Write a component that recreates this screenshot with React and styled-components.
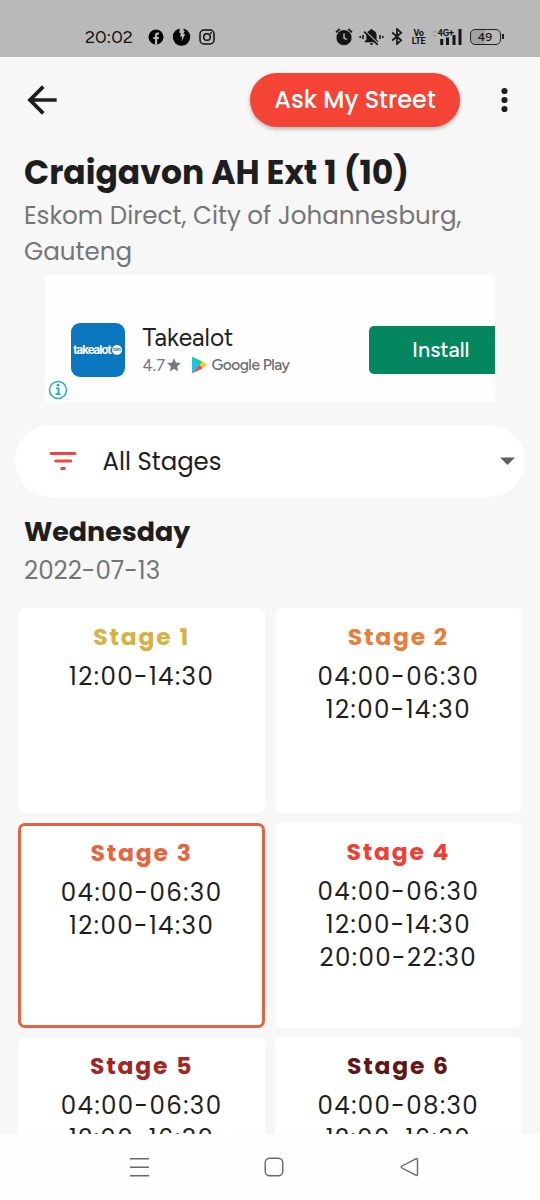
import React from "react";
import styled, { createGlobalStyle } from "styled-components";

const GlobalStyle = createGlobalStyle`
  * { box-sizing: border-box; }
  body {
    margin: 0;
    background: #f7f7f7;
    color: #1e1e1e;
    font-family: Poppins, Inter, "Open Sans", sans-serif;
  }
  svg { display: block; flex: none; }
`;

const Screen = styled.div`
  display: flex;
  flex-direction: column;
  width: 540px;
  height: 1200px;
  overflow: hidden;
`;

/* status bar */
const StatusBar = styled.header`
  flex: none;
  display: flex;
  justify-content: space-between;
  height: 57px;
  padding: 16px 39.5px 0 85px;
  background: #b9b9b9;
  color: #111;
`;
const StatusGroup = styled.div`
  display: flex;
  align-items: center;
  height: 41px;
  gap: ${(p) => p.$gap}px;
`;
const Clock = styled.span`
  width: 55px;
  font: 400 18px/22px Figtree, Inter, sans-serif;
`;
const VoLte = styled.span`
  display: flex;
  flex-direction: column;
  align-items: center;
  width: 12px;
  margin: 0 6.5px 0 4.5px;
  font: 700 9px/8px Roboto, sans-serif;
  letter-spacing: -0.4px;
`;
const StatusIcon = styled.svg`
  margin-right: ${(p) => p.$after || 0}px;
`;
const Battery = styled.span`
  position: relative;
  display: flex;
  align-items: center;
  justify-content: center;
  width: 31px;
  height: 16px;
  border: 1.5px solid #222;
  border-radius: 5px;
  background: linear-gradient(90deg, #a2a2a2 48%, transparent 48%);
  font: 500 12px/12px Figtree, Inter, sans-serif;
  &::after {
    content: "";
    position: absolute;
    right: -4px;
    top: 4px;
    width: 2px;
    height: 5px;
    background: #222;
  }
`;

/* page */
const Content = styled.main`
  flex: 1;
  min-height: 0;
  overflow: hidden;
`;
const Toolbar = styled.div`
  display: flex;
  align-items: center;
  height: 85px;
  padding: 0 29.5px 0 20px;
`;
const PillButton = styled.button`
  width: 210px;
  height: 54px;
  margin: 0 38.5px 0 auto;
  padding: 0;
  border: 0;
  border-radius: 27px;
  background: #f54336;
  box-shadow: 0 2px 4px rgba(0, 0, 0, 0.28);
  color: #fff;
  font: 500 24px/36px Poppins, Inter, sans-serif;
`;
const Heading = styled.div`
  padding: 11px 24px 0 24px;
`;
const Title = styled.h1`
  margin: 0 0 5px;
  font-size: 33px;
  line-height: 40px;
  font-weight: 700;
  white-space: nowrap;
`;
const Subtitle = styled.div`
  color: #757575;
  font-size: 24.6px;
  line-height: 36px;
  white-space: nowrap;
`;

/* advert */
const Ad = styled.section`
  position: relative;
  display: flex;
  align-items: flex-start;
  width: 450.5px;
  height: 127px;
  margin: 5px 0 0 44.5px;
  padding: 48px 0 0 26px;
  background: #fefefe;
  font-family: Figtree, Inter, sans-serif;
`;
const AppLogo = styled.div`
  display: flex;
  align-items: center;
  justify-content: center;
  width: 54px;
  height: 54px;
  border-radius: 9px;
  background: #0a76bd;
  color: #fff;
  font: 700 11.5px/14px Inter, sans-serif;
  letter-spacing: -1px;
`;
const LogoDot = styled.span`
  width: 10px;
  height: 10px;
  margin-left: 1px;
  border-radius: 50%;
  background: #fff;
  color: #0a76bd;
  font-size: 4px;
  line-height: 9px;
  letter-spacing: -0.4px;
  text-align: center;
`;
const AdText = styled.div`
  margin-left: 18px;
  color: #202124;
`;
const AdName = styled.div`
  font-size: 24.5px;
  line-height: 30px;
`;
const AdMeta = styled.div`
  display: flex;
  align-items: center;
  height: 23px;
  color: #777b80;
  font-size: 16.5px;
  line-height: 20px;
`;
const Store = styled.span`
  margin-left: 4px;
  color: #666a6e;
  font-size: 15.5px;
  font-weight: 500;
  letter-spacing: -0.5px;
`;
const Rating = styled.span`
  width: 24px;
`;
const InstallButton = styled.div`
  width: 126px;
  height: 48px;
  margin: 3px 0 0 auto;
  padding-left: 43px;
  border-radius: 5px 0 0 5px;
  background: #04875f;
  color: #fff;
  font-size: 21.7px;
  line-height: 47px;
  font-weight: 500;
`;
const InfoBadge = styled.svg`
  position: absolute;
  left: 3.5px;
  bottom: 2.5px;
`;

/* filter */
const FilterPill = styled.div`
  display: flex;
  align-items: center;
  height: 72px;
  margin: 23px 15px 0;
  padding: 0 10.5px 0 34px;
  border-radius: 36px;
  background: #fff;
`;
const FilterLabel = styled.span`
  flex: 1;
  margin-left: 25.5px;
  padding-top: 1px;
  font-size: 24.4px;
  line-height: 36px;
`;

/* schedule */
const DayHeader = styled.div`
  padding: 17px 24px 0;
`;
const DayName = styled.h2`
  margin: 0;
  font-size: 26.9px;
  line-height: 36px;
  font-weight: 700;
`;
const DayDate = styled.div`
  margin-top: 3px;
  color: #757575;
  font-size: 24.6px;
  line-height: 36px;
`;
const StageGrid = styled.div`
  display: grid;
  grid-template-columns: 1fr 1fr;
  grid-auto-rows: 205px;
  gap: 9.5px;
  padding: 19px 18px 0;
`;
const StageCard = styled.article`
  padding-top: ${(p) => (p.$active ? 10.5 : 12)}px;
  border: ${(p) => (p.$active ? "3px solid #e3623f" : "0")};
  border-radius: 7px;
  background: #fff;
  text-align: center;
  overflow: hidden;
`;
const StageName = styled.h3`
  margin: 0 0 7px;
  color: ${(p) => p.$color};
  font-size: 23.5px;
  line-height: 33px;
  font-weight: 700;
  letter-spacing: 1.8px;
`;
const Slot = styled.div`
  font-size: 24.5px;
  line-height: 33px;
  color: #1e1e1e;
  letter-spacing: 1.4px;
`;

/* system navigation */
const NavBar = styled.nav`
  flex: none;
  display: flex;
  justify-content: space-between;
  height: 66px;
  padding: 23px 120.5px 0 129px;
  background: #fefefe;
`;

const STAGES = [
  { n: 1, color: "#dbb042", slots: ["12:00-14:30"] },
  { n: 2, color: "#e5803a", slots: ["04:00-06:30", "12:00-14:30"] },
  { n: 3, color: "#e8643c", slots: ["04:00-06:30", "12:00-14:30"], active: true },
  { n: 4, color: "#ee4037", slots: ["04:00-06:30", "12:00-14:30", "20:00-22:30"] },
  { n: 5, color: "#a12726", slots: ["04:00-06:30", "12:00-16:30"] },
  { n: 6, color: "#621618", slots: ["04:00-08:30", "12:00-16:30"] },
];

function Status() {
  return (
    <StatusBar>
      <StatusGroup $gap={8}>
        <Clock>20:02</Clock>
        <svg width="16" height="16" viewBox="0 0 16 16">
          <circle cx="8" cy="8" r="7.5" fill="#050505" />
          <path d="M7 15.5V10H5.300V7.900H7V6.400c0-1.900 1-2.800 2.700-2.800h1.400v2h-1c-.7 0-.9.300-.9.900v1.400h1.900l-.3 2.100H9.200v5.500z" fill="#b9b9b9" />
        </svg>
        <svg width="19" height="19" viewBox="0 0 19 19">
          <circle cx="9.5" cy="10" r="8.7" fill="#050505" />
          <path d="M7.2 0h5.200l-1.200 3 1.600 1-1.500 3h2L9.600 14.500l.5-5H8l.8-3.200-1.900-1 1-2z" fill="#b9b9b9" />
        </svg>
        <svg width="16" height="16" viewBox="0 0 16 16" fill="none" stroke="#111" strokeWidth="1.5">
          <rect x="1" y="1" width="14" height="14" rx="4" />
          <circle cx="8" cy="8" r="3.3" />
          <circle cx="12" cy="4" r=".3" />
        </svg>
      </StatusGroup>
      <StatusGroup $gap={0}>
        <StatusIcon $after={6} width="18" height="18" viewBox="0 0 18 18">
          <circle cx="9" cy="9.700" r="7.600" fill="#161616" />
          <path d="M1 4.300L4.600 1M17 4.300L13.400 1" stroke="#161616" strokeWidth="1.800" />
          <path d="M9 5.600v4.300l2.700 1.800" fill="none" stroke="#b9b9b9" strokeWidth="1.500" />
        </StatusIcon>
        <StatusIcon $after={7} width="25" height="18" viewBox="0 0 25 18">
          <path d="M12.500 1c.8 0 1.300.6 1.300 1.300 2.400.6 3.800 2.500 3.800 5v4.200l1.700 1.700v1H5.700v-1l1.700-1.700V7.300c0-2.500 1.400-4.400 3.800-5C11.200 1.600 11.700 1 12.500 1zM10.800 15.200h3.400a1.700 1.700 0 0 1-3.400 0z" fill="#161616" />
          <path d="M6.300 3.200L20 16.200" stroke="#b9b9b9" strokeWidth="1.300" />
          <path d="M5 3.600L18.900 16.800" stroke="#161616" strokeWidth="1.600" />
          <path d="M4 7v4M1.200 8v2M21 7v4M23.800 8v2" stroke="#161616" strokeWidth="1.600" />
        </StatusIcon>
        <StatusIcon $after={5} width="12" height="17" viewBox="0 0 12 17" fill="none" stroke="#161616" strokeWidth="1.700">
          <path d="M1.200 4.500l9 7.800L6 16V1l4.200 3.700-9 7.800" />
        </StatusIcon>
        <VoLte>
          <span>Vo</span>
          <span>LTE</span>
        </VoLte>
        <StatusIcon $after={7.5} width="31" height="18" viewBox="0 0 31 18">
          <path d="M1 4.500l2.500-2 2.500 2zM1 7l2.500 2L6 7z" fill="#999" />
          <text x="6.500" y="7.500" fontFamily="Roboto, sans-serif" fontSize="9.500" fontWeight="700" fill="#161616" textLength="16.500">4G+</text>
          <path d="M10.700 11v6M16.500 9.500V17M23 7v10M29 1v16" stroke="#161616" strokeWidth="3" />
        </StatusIcon>
        <Battery>49</Battery>
      </StatusGroup>
    </StatusBar>
  );
}

function Advert() {
  return (
    <Ad>
      <AppLogo>
        takealot<LogoDot>com</LogoDot>
      </AppLogo>
      <AdText>
        <AdName>Takealot</AdName>
        <AdMeta>
          <Rating>4.7</Rating>
          <svg width="14" height="14" viewBox="0 0 24 24" fill="#777b80">
            <path d="M12 18.300L19.400 23l-2-8.600L24 8.700l-8.700-.8L12 0 8.700 7.900 0 8.700l6.600 5.700-2 8.600z" />
          </svg>
          <StatusIcon width="27" height="18" viewBox="0 0 27 18">
            <path d="M11 .5v17l8-8.500z" fill="#18c5e8" />
            <path d="M11 .5L22 6l-3.500 3.500z" fill="#16d67c" />
            <path d="M11 17.500L22 12l-3.500-3z" fill="#ee4050" />
            <path d="M21.500 5.800L26 9l-4.500 3.200L18.300 9z" fill="#fcc61b" />
          </StatusIcon>
          <Store>Google Play</Store>
        </AdMeta>
      </AdText>
      <InstallButton>Install</InstallButton>
      <InfoBadge width="20" height="20" viewBox="0 0 20 20">
        <circle cx="10" cy="10" r="8.500" fill="none" stroke="#22abc4" strokeWidth="1.500" />
        <path d="M8 8.300h2.500v5.200M7.700 14.200h4.700" fill="none" stroke="#22abc4" strokeWidth="1.800" />
        <circle cx="10" cy="5.200" r="1.400" fill="#22abc4" />
      </InfoBadge>
    </Ad>
  );
}

export default function App() {
  return (
    <Screen>
      <GlobalStyle />
      <Status />
      <Content>
        <Toolbar>
          <svg width="44" height="44" viewBox="0 0 24 24" fill="#1e1e1e">
            <path d="M20 11H7.830l5.590-5.590L12 4l-8 8 8 8 1.410-1.410L7.830 13H20v-2z" />
          </svg>
          <PillButton>Ask My Street</PillButton>
          <svg width="12" height="26" viewBox="0 0 12 26" fill="#1e1e1e">
            <circle cx="5.500" cy="4" r="3.100" />
            <circle cx="5.500" cy="13" r="3.100" />
            <circle cx="5.500" cy="22" r="3.100" />
          </svg>
        </Toolbar>
        <Heading>
          <Title>Craigavon AH Ext 1 (10)</Title>
          <Subtitle>Eskom Direct, City of Johannesburg,</Subtitle>
          <Subtitle>Gauteng</Subtitle>
        </Heading>
        <Advert />
        <FilterPill>
          <svg width="28" height="20" viewBox="0 0 28 20" fill="none" stroke="#ea4a3e" strokeWidth="3" strokeLinecap="round">
            <path d="M2 2.500h24M6.700 10h15M12.700 17.500h2.600" />
          </svg>
          <FilterLabel>All Stages</FilterLabel>
          <svg width="15" height="8" viewBox="0 0 15 8">
            <path d="M0 .5h15L7.500 8z" fill="#616161" />
          </svg>
        </FilterPill>
        <DayHeader>
          <DayName>Wednesday</DayName>
          <DayDate>2022-07-13</DayDate>
        </DayHeader>
        <StageGrid>
          {STAGES.map((s) => (
            <StageCard key={s.n} $active={s.active}>
              <StageName $color={s.color}>Stage {s.n}</StageName>
              {s.slots.map((t) => (
                <Slot key={t}>{t}</Slot>
              ))}
            </StageCard>
          ))}
        </StageGrid>
      </Content>
      <NavBar>
        <svg width="20" height="20" viewBox="0 0 20 20" stroke="#666" strokeWidth="1.500">
          <path d="M1 1.700h19M1 10.200h19M1 18.700h19" />
        </svg>
        <svg width="20" height="20" viewBox="0 0 20 20" fill="none" stroke="#666" strokeWidth="1.400">
          <rect x="1.200" y="1.200" width="17.600" height="17.600" rx="4.500" />
        </svg>
        <svg width="20" height="20" viewBox="0 0 20 20" fill="none" stroke="#666" strokeWidth="1.400" strokeLinejoin="round">
          <path d="M15.800 1.800Q17.500 1 17.500 2.800v14.400q0 1.800-1.700 1L2 11q-1.600-1 0-2z" />
        </svg>
      </NavBar>
    </Screen>
  );
}
